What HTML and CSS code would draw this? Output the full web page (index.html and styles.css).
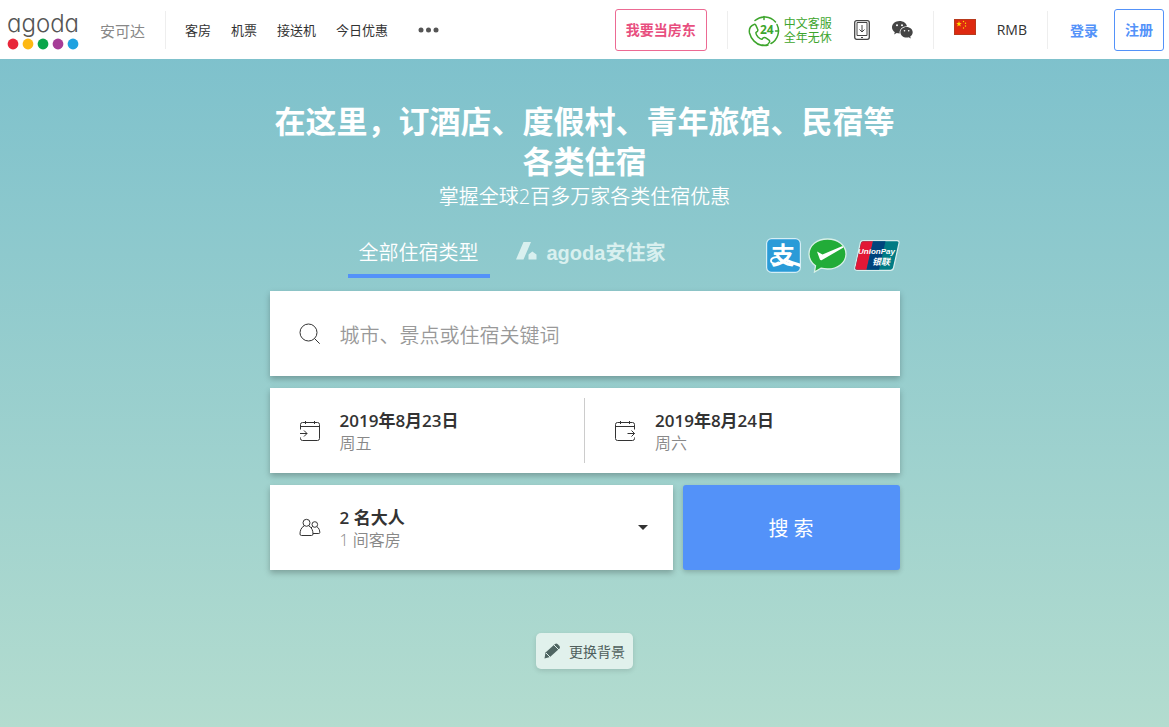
FILE: index.html
```html
<!DOCTYPE html>
<html lang="zh-CN">
<head>
  <meta charset="UTF-8">
  <meta name="viewport" content="width=device-width, initial-scale=1.0">
  <title>agoda 安可达</title>
  <link rel="stylesheet" href="styles.css">
</head>
<body>
  <header class="header">
    <a class="brand" href="#">
      <span class="logo">
        <span class="logo-word">agoda</span>
        <svg class="logo-dots" width="73" height="12" viewBox="0 0 73 12" aria-hidden="true">
          <circle cx="6" cy="6" r="5.4" fill="#e8273a"/>
          <circle cx="21" cy="6" r="5.4" fill="#fdb813"/>
          <circle cx="36" cy="6" r="5.4" fill="#0aa54a"/>
          <circle cx="51" cy="6" r="5.4" fill="#a63d97"/>
          <circle cx="66" cy="6" r="5.4" fill="#1ea2e0"/>
        </svg>
      </span>
      <span class="brand-name">安可达</span>
    </a>
    <nav class="nav">
      <a href="#">客房</a>
      <a href="#">机票</a>
      <a href="#">接送机</a>
      <a href="#">今日优惠</a>
      <button class="more" type="button" aria-label="更多">
        <svg width="22" height="6" viewBox="0 0 22 6"><g fill="#555"><circle cx="3" cy="3" r="2.5"/><circle cx="10.5" cy="3" r="2.5"/><circle cx="18" cy="3" r="2.5"/></g></svg>
      </button>
    </nav>

    <a class="host-btn" href="#">我要当房东</a>
    <div class="tools">
      <a class="service" href="#">
        <svg width="32" height="32" viewBox="0 0 32 32" fill="none" stroke="#3da52c" stroke-width="1.5" stroke-linecap="round" aria-hidden="true">
          <path d="M7 5.5A14.5 14.5 0 0 1 27.5 7M29 9.500A14.500 14.500 0 0 1 23 28.500M20 30Q17 31 14 30"/>
          <path d="M16 1.500v3M30.500 16h-3"/>
          <path d="M6 9.500C2 11 .8 14 1.500 18C3 24 8 29.500 14 30.500C17.500 31 20.500 29 21.500 27Q22 26 21 25L17.500 22.700Q16 22 15 23L14 24.200Q12.500 24.500 10 22Q7.500 19 8 17.500L9.500 16.200Q10.200 15 9.500 13.800L7.800 10.200Q7 9 6 9.500Z"/>
          <text class="service-24" x="12" y="19">24</text>
        </svg>
        <span>中文客服<br>全年无休</span>
      </a>
      <a class="tool" href="#" aria-label="下载应用">
        <svg width="16" height="20" viewBox="0 0 16 20" fill="none" stroke="#444">
          <rect x=".7" y=".7" width="14.600" height="18.600" rx="2" stroke-width="1.300"/>
          <path d="M3 2.500h10v13H3zM8 5v7M5.500 9.500L8 12l2.500-2.500M7 17.500h2"/>
        </svg>
      </a>
      <a class="tool" href="#" aria-label="微信">
        <svg width="21" height="18" viewBox="0 0 21 18">
          <path fill="#444" d="M7.500 0C3.400 0 0 2.800 0 6.300c0 2 1.100 3.700 2.800 4.900l-.7 2.200 2.600-1.300c1 .3 2 .4 3 .4C7 8.500 10.500 5.300 15 5.300 14.500 2.200 11.300 0 7.500 0z"/>
          <path fill="#444" d="M14.600 6c-3.500 0-6.200 2.400-6.200 5.300s2.800 5.300 6.200 5.300c.8 0 1.500-.1 2.100-.3l2.100 1.200-.6-1.900c1.500-1 2.500-2.500 2.500-4.300C20.700 8.400 18 6 14.600 6z"/>
          <g fill="#fff"><circle cx="5" cy="4.300" r="1"/><circle cx="10" cy="4.300" r="1"/><circle cx="12.500" cy="9.800" r=".8"/><circle cx="16.700" cy="9.800" r=".8"/></g>
        </svg>
      </a>
    </div>
    <div class="locale">
      <svg class="flag" width="22" height="16" viewBox="0 0 22 16" role="img" aria-label="中国">
        <rect width="22" height="16" fill="#b83a1d"/>
        <rect x="1" y="1" width="20" height="14" fill="#de2910"/>
        <g fill="#ffde00">
          <path d="M5 2l.7 2h2.100L6.100 5.300l.7 2.100L5 6.200 3.200 7.400l.7-2.100L2.200 4h2.100z"/>
          <circle cx="9.500" cy="2.500" r=".7"/><circle cx="11.500" cy="4.300" r=".7"/><circle cx="11.500" cy="7" r=".7"/><circle cx="9.500" cy="9" r=".7"/>
        </g>
      </svg>
      <a href="#">RMB</a>
    </div>
    <div class="account">
      <a class="login" href="#">登录</a>
      <a class="register" href="#">注册</a>
    </div>
  </header>

  <main class="main">
    <h1>在这里，订酒店、度假村、青年旅馆、民宿等各类住宿</h1>
    <p class="subtitle">掌握全球2百多万家各类住宿优惠</p>

    <div class="tabs-row">
      <div class="tabs">
        <button class="tab active" type="button">全部住宿类型</button>
        <button class="tab homes" type="button">
          <svg width="21" height="18" viewBox="0 0 21 18" fill="currentColor" aria-hidden="true"><path d="M7.500 0h7.500L7.500 17.500H0zM12.500 17.500v-5l3.800-3 4.200 3v5z"/></svg>
          agoda安住家
        </button>
      </div>
      <div class="payments">
        <svg width="35" height="35" viewBox="0 0 35 35" role="img" aria-label="支付宝">
          <rect x=".6" y=".6" width="33.800" height="33.800" rx="5" fill="#2a9bd8" stroke="#d5eef5" stroke-width="1.200"/>
          <text class="pay-zhi" x="5" y="26">支</text>
          <path d="M19 20q6 3 15 5.500v3.500q-8-2.500-16-6.500z" fill="#fff"/>
          <path d="M14 20c-5-2-9 0-9 2.800s5 4 8 1.200" fill="none" stroke="#fff" stroke-width="1.800"/>
        </svg>
        <svg width="39" height="35" viewBox="0 0 39 35" role="img" aria-label="微信支付">
          <path d="M19.500 1C9 1 1 7.500 1 16c0 5 2.500 9 6.500 11.800L6.500 34l6.500-3.800c2 .5 4.200.8 6.500.8C30 31 38 24.500 38 16S30 1 19.500 1z" fill="#22ac38" stroke="#d8f0e8" stroke-width="1.300"/>
          <path d="M9 13.500l5.500 3L34.500 8l1 1.500L14 22q-1.500.7-2.200-.8z" fill="#fff"/>
        </svg>
        <svg width="46" height="31" viewBox="0 0 46 31" role="img" aria-label="UnionPay 银联">
          <path d="M9 .7h34q2.500 0 2 2.500L39.500 28q-.5 2.300-3 2.300H3q-2.800 0-2.200-2.500L6.300 3Q6.800.7 9 .7z" fill="#007b84" stroke="#d8eeee" stroke-width="1.200"/>
          <path d="M9.500 1.300H19L12.500 29.700H3q-2 0-1.600-2L6.900 3.200Q7.300 1.300 9.500 1.300z" fill="#e21836"/>
          <path d="M19 1.300h12.500L25 29.700H12.500z" fill="#00447c"/>
          <g class="pay-union"><text x="4" y="14">UnionPay</text><text class="pay-yinlian" x="18" y="25">银联</text></g>
        </svg>
      </div>
    </div>

    <form class="search" onsubmit="return false">
      <div class="card place">
        <label for="place">
          <svg width="22" height="22" viewBox="0 0 22 22" fill="none" stroke="#333" aria-hidden="true"><circle cx="9.500" cy="9.500" r="8.500"/><path d="M15.500 15.500l5.200 5.200"/></svg>
        </label>
        <input type="text" id="place" aria-label="目的地" placeholder="城市、景点或住宿关键词">
      </div>

      <div class="card dates">
        <button class="field" type="button">
          <svg width="22" height="20" viewBox="0 0 22 20" fill="none" stroke="#333" aria-hidden="true">
            <path d="M1.500 8.500v-5q0-2 2-2h15q2 0 2 2v14q0 2-2 2h-15q-2 0-2-2v-1M1.500 5.500h19M6.500 0v3M15.500 0v3M1 12.500h7M5 9.500l3 3-3 3"/>
          </svg>
          <span class="field-text"><strong>2019年8月23日</strong><span>周五</span></span>
        </button>
        <button class="field" type="button">
          <svg width="22" height="20" viewBox="0 0 22 20" fill="none" stroke="#333" aria-hidden="true">
            <path d="M20.500 8.500v-5q0-2-2-2h-15q-2 0-2 2v14q0 2 2 2h15q2 0 2-2v-1M1.500 5.500h19M6.500 0v3M15.500 0v3M13.500 12.500h7M17.500 9.500l3 3-3 3"/>
          </svg>
          <span class="field-text"><strong>2019年8月24日</strong><span>周六</span></span>
        </button>
      </div>

      <div class="last-row">
        <button class="card field guests" type="button" aria-haspopup="listbox">
          <svg width="22" height="20" viewBox="0 0 22 20" fill="none" stroke="#333" aria-hidden="true">
            <circle cx="7.500" cy="4.800" r="3.500"/>
            <path d="M5 8C2 9.500 1 13 1 16q0 1.500 1.500 1.500h10q1.500 0 1.500-1.500c0-3-1-6.500-4-8"/>
            <circle cx="15.800" cy="6.500" r="2.800"/>
            <path d="M13.500 8.500l-1.500 1.500M18 8.800c2 1.200 2.800 3.700 2.800 5.700q0 1-1 1H14"/>
          </svg>
          <span class="field-text"><strong>2 名大人</strong><span>1 间客房</span></span>
          <svg class="caret" width="10" height="5" viewBox="0 0 10 5" aria-hidden="true"><path d="M0 0h10L5 5z" fill="#333"/></svg>
        </button>
        <button class="submit" type="submit">搜 索</button>
      </div>
    </form>

    <button class="change-bg" type="button">
      <svg width="17" height="16" viewBox="0 0 17 16" aria-hidden="true">
        <path fill="#4f6562" d="M1.500 9.500L11 1q1.200-1 2.500 0l2 2q1 1.200 0 2.500L6 14l-5.500 1.500z"/>
        <path stroke="#dff0eb" fill="none" d="M10 2l5 5M2 10l4 4"/>
      </svg>
      更换背景
    </button>
  </main>
</body>
</html>
```

FILE: styles.css
```css
* {
  box-sizing: border-box;
}
body {
  margin: 0;
  min-height: 100vh;
  font-family: "Open Sans", "Noto Sans CJK SC", sans-serif;
  font-size: 14px;
  color: #333;
  background: linear-gradient(#7abfcc, #b3dccf) no-repeat;
}
a {
  color: inherit;
  text-decoration: none;
}
button,
input {
  padding: 0;
  border: none;
  background: none;
  font-family: inherit;
  color: inherit;
}
button {
  cursor: pointer;
}
svg {
  display: block;
  flex-shrink: 0;
}

/* header */
.header {
  display: flex;
  align-items: center;
  height: 59px;
  padding: 0 5px 0 7px;
  background: #fff;
  white-space: nowrap;
}
.brand {
  display: flex;
  align-items: center;
  gap: 20px;
  padding-right: 20px;
}
.logo {
  width: 73px;
}
.logo-word {
  display: block;
  font-family: Inter, sans-serif;
  font-feature-settings: "cv11";
  font-size: 24px;
  font-weight: 300;
  line-height: 28px;
  color: #555;
}
.brand-name {
  padding-top: 2px;
  font-size: 15px;
  color: #888;
}
.nav,
.tools,
.locale,
.account {
  display: flex;
  align-items: center;
  height: 38px;
  border-left: 1px solid #eee;
}
.nav {
  gap: 20px;
  padding-left: 19px;
  font-size: 13px;
}
.more {
  margin-left: 10px;
}
.host-btn,
.register {
  height: 42px;
  padding: 0 10px;
  border: 1px solid #ec6a93;
  border-radius: 3px;
  line-height: 40px;
  font-weight: 600;
  color: #e84f80;
}
.host-btn {
  margin: 0 20px 0 auto;
}
.tools {
  gap: 22px;
  padding: 0 20px;
}
.service {
  display: flex;
  align-items: center;
  gap: 4px;
  padding-top: 2px;
  font-size: 12px;
  line-height: 14px;
  color: #3da52c;
}
.service-24 {
  font-size: 12px;
  font-weight: 700;
  fill: #3da52c;
  stroke: none;
}
.locale {
  gap: 21px;
  padding: 0 20px;
}
.flag {
  margin-bottom: 5px;
}
.account {
  gap: 16px;
  padding-left: 22px;
}
.login,
.register {
  font-weight: 600;
  color: #5392f9;
}
.register {
  border-color: #5392f9;
}

/* search */
.main {
  max-width: 630px;
  margin: 0 auto;
  padding-top: 42px;
}
h1 {
  margin: 0;
  font-size: 31px;
  line-height: 40px;
  text-align: center;
  color: #fff;
}
.subtitle {
  margin: 0;
  font-size: 20px;
  font-weight: 350;
  line-height: 32px;
  text-align: center;
  color: #fff;
}
.tabs-row {
  display: flex;
  align-items: center;
  justify-content: space-between;
  height: 50px;
  margin: 15px 0 13px 78px;
}
.tabs {
  display: flex;
  gap: 15px;
}
.tab {
  height: 50px;
  padding: 0 11px;
  border-bottom: 4px solid transparent;
  font-size: 20px;
  font-weight: 350;
  color: #fff;
}
.tab.active {
  border-color: #5392f9;
}
.homes {
  display: flex;
  align-items: center;
  gap: 10px;
  font-family: "Liberation Sans", "Noto Sans CJK SC", sans-serif;
  font-weight: 600;
  color: #d9f0ef;
}
.payments {
  display: flex;
  align-items: center;
  gap: 7px;
  padding-top: 5px;
}
.pay-zhi {
  font-size: 24px;
  font-weight: 700;
  fill: #fff;
}
.pay-union {
  font-family: "Liberation Sans", "Noto Sans CJK SC", sans-serif;
  font-size: 8px;
  font-style: italic;
  font-weight: 700;
  fill: #fff;
}
.pay-yinlian {
  font-size: 9px;
}
.search {
  display: grid;
  gap: 12px;
}
.card {
  display: flex;
  align-items: center;
  height: 85px;
  background: #fff;
  box-shadow: 0 3px 6px rgba(0, 0, 0, 0.25);
}
.place {
  gap: 19px;
  padding: 0 29px;
}
.place input {
  flex: 1;
  height: 60px;
  padding-top: 3px;
  outline: none;
  font-size: 20px;
  font-weight: 350;
}
.place input::placeholder {
  color: #999;
}
.field {
  display: flex;
  align-items: center;
  flex: 1;
  gap: 19px;
  padding: 0 25px 0 29px;
  text-align: left;
}
.dates .field {
  height: 65px;
}
.dates .field + .field {
  border-left: 1px solid #ccc;
}
.field-text {
  flex: 1;
  padding-top: 2px;
  font-size: 16px;
  line-height: 22px;
}
.field-text strong,
.field-text span {
  display: block;
}
.field-text strong {
  font-size: 17px;
  font-weight: 600;
}
.field-text span {
  font-weight: 350;
  color: #888;
}
.last-row {
  display: flex;
  gap: 10px;
}
.guests {
  background: #fff;
}
.submit {
  width: 217px;
  border-radius: 3px;
  background: #5392f9;
  box-shadow: 0 2px 5px rgba(0, 0, 0, 0.2);
  font-size: 20px;
  color: #fff;
}
.change-bg {
  display: flex;
  align-items: center;
  gap: 8px;
  height: 36px;
  margin: 63px auto 0;
  padding: 0 8px;
  border-radius: 5px;
  background: #e1f1ec;
  box-shadow: 0 2px 5px rgba(0, 0, 0, 0.12);
  font-size: 14px;
  color: #4f5f5c;
}
```
